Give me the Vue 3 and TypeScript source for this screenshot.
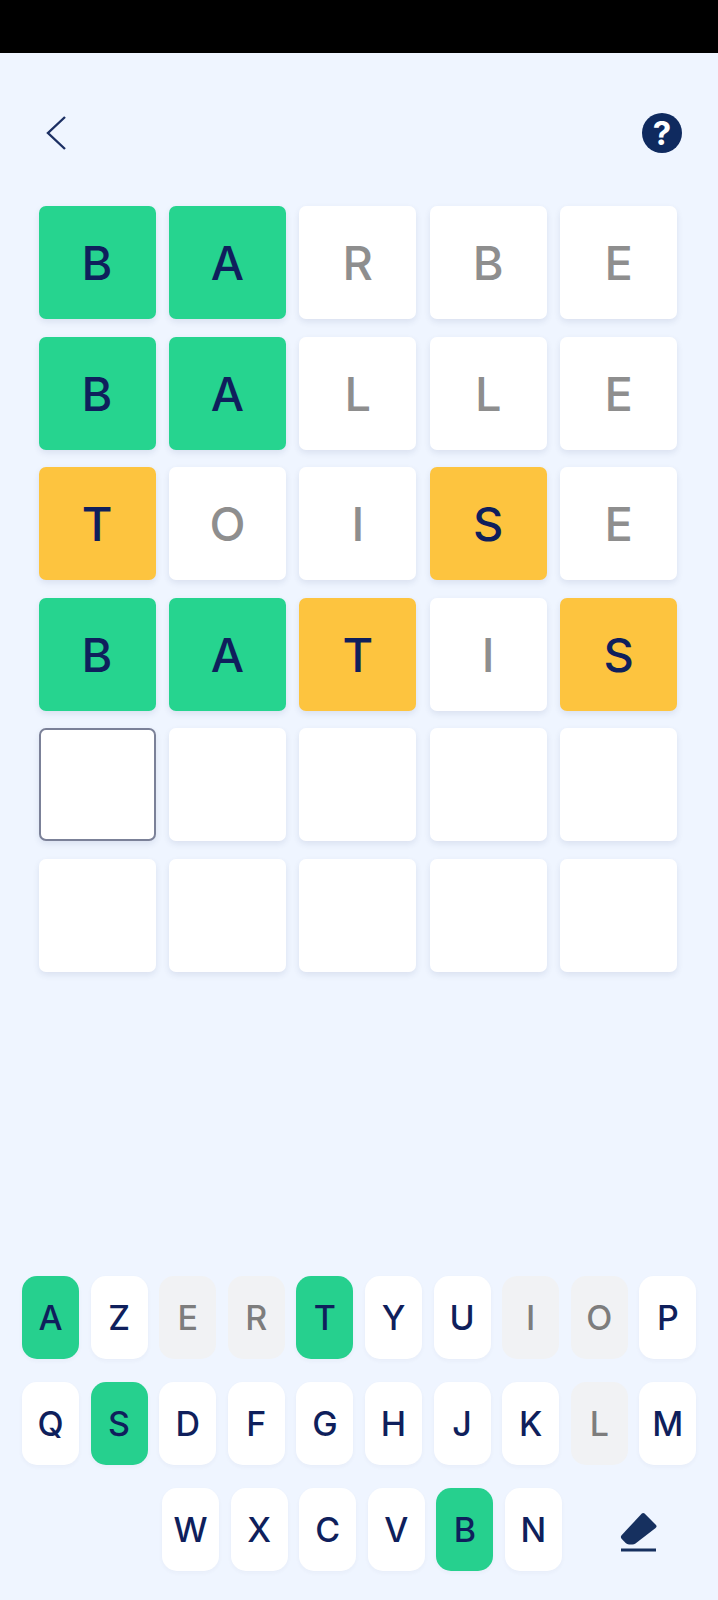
<script setup lang="ts">
type Etat = 'vide' | 'bien' | 'mal' | 'absent' | 'curseur'

interface Case {
  lettre: string
  etat: Etat
}

// g = bien placé, y = mal placé, x = absent
function ligne(mot: string, code: string): Case[] {
  const etats: Record<string, Etat> = { g: 'bien', y: 'mal', x: 'absent' }
  return mot.split('').map((lettre, i) => ({ lettre, etat: etats[code[i]] }))
}

function vide(): Case[] {
  return Array.from({ length: 5 }, () => ({ lettre: '', etat: 'vide' as Etat }))
}

const lignes: Case[][] = [
  ligne('BARBE', 'ggxxx'),
  ligne('BALLE', 'ggxxx'),
  ligne('TOISE', 'yxxyx'),
  ligne('BATIS', 'ggyxy'),
  vide().map((c, i) => (i === 0 ? { ...c, etat: 'curseur' as Etat } : c)),
  vide(),
]

const clavier = ['AZERTYUIOP', 'QSDFGHJKLM', 'WXCVBN'].map((r) => r.split(''))
const vertes = 'ATSB'
const grises = 'ERIOL'

function classeTouche(t: string): string {
  if (vertes.includes(t)) return 'touche verte'
  if (grises.includes(t)) return 'touche grise'
  return 'touche'
}
</script>

<template>
  <div class="page">
    <div class="barre-statut"></div>

    <header class="entete">
      <svg class="retour" width="22" height="36" viewBox="0 0 22 36" aria-label="Retour">
        <path d="M20 2 L3 18 L20 34" fill="none" stroke="#1c2f63" stroke-width="2.4" />
      </svg>
      <div class="aide">?</div>
    </header>

    <main class="grille">
      <template v-for="(l, i) in lignes" :key="i">
        <div v-for="(c, j) in l" :key="j" class="case" :class="c.etat">{{ c.lettre }}</div>
      </template>
    </main>

    <section class="clavier">
      <div v-for="(rang, i) in clavier" :key="i" class="rang" :class="{ dernier: i === 2 }">
        <div v-for="t in rang" :key="t" :class="classeTouche(t)">{{ t }}</div>
        <div v-if="i === 2" class="effacer">
          <svg width="38" height="42" viewBox="0 0 38 42" aria-label="Effacer">
            <path
              d="M24.6 1.6 L36 13 Q37.4 14.6 35.6 16 L15.5 31.4 Q14 32.4 12.4 32.4 L9 32.4 Q7 32.4 5.6 31 L1.6 26.8 Q0 25 1.8 23 L21.6 1.8 Q23 0.4 24.6 1.6 Z"
              fill="#16305f"
            />
            <path d="M1 38 L36 38" stroke="#16305f" stroke-width="3" />
          </svg>
        </div>
      </div>
    </section>
  </div>
</template>

<style scoped>
.page {
  display: flex;
  flex-direction: column;
  height: 1600px;
  background: #eff5ff;
  font-family: Inter, "Noto Sans", sans-serif;
  color: #0f1f5c;
}

.barre-statut {
  height: 53px;
  background: #000;
}

.entete {
  display: flex;
  justify-content: space-between;
  align-items: center;
  height: 40px;
  margin-top: 60px;
  padding: 0 36px 0 45px;
}

.aide {
  display: flex;
  align-items: center;
  justify-content: center;
  width: 40px;
  height: 40px;
  border-radius: 50%;
  background: #0f2a5f;
  color: #fff;
  font-size: 33px;
  font-weight: 700;
  line-height: 1;
}

.grille {
  display: grid;
  grid-template-columns: repeat(5, 117px);
  grid-auto-rows: 113px;
  column-gap: 13.4px;
  row-gap: 17.6px;
  margin-top: 53px;
  padding-left: 38.5px;
}

.case {
  display: flex;
  align-items: center;
  justify-content: center;
  border-radius: 7px;
  background: #fff;
  box-shadow: 0 3px 6px rgba(40, 60, 110, 0.1);
  font-size: 47px;
  font-weight: 500;
  line-height: 1;
}

.case.bien {
  background: #26d48f;
}

.case.mal {
  background: #fdc43f;
}

.case.absent {
  color: #8e8e8e;
}

.case.curseur {
  border: 2px solid #7b8198;
}

.clavier {
  display: flex;
  flex-direction: column;
  gap: 23px;
  margin-top: auto;
  padding: 0 0 29px 22px;
}

.rang {
  display: flex;
  gap: 11.6px;
}

.rang.dernier {
  padding-left: 140px;
}

.touche {
  display: flex;
  align-items: center;
  justify-content: center;
  width: 57px;
  height: 83px;
  border-radius: 15px;
  background: #fff;
  box-shadow: 0 2px 4px rgba(40, 60, 110, 0.04);
  font-size: 34px;
  font-weight: 500;
  line-height: 1;
}

.touche.verte {
  background: #26d08e;
}

.touche.grise {
  background: #f1f2f4;
  color: #7d7d7d;
  box-shadow: none;
}

.effacer {
  display: flex;
  justify-content: center;
  align-items: center;
  width: 154px;
  padding-top: 6px;
  margin-left: -11.6px;
}
</style>
